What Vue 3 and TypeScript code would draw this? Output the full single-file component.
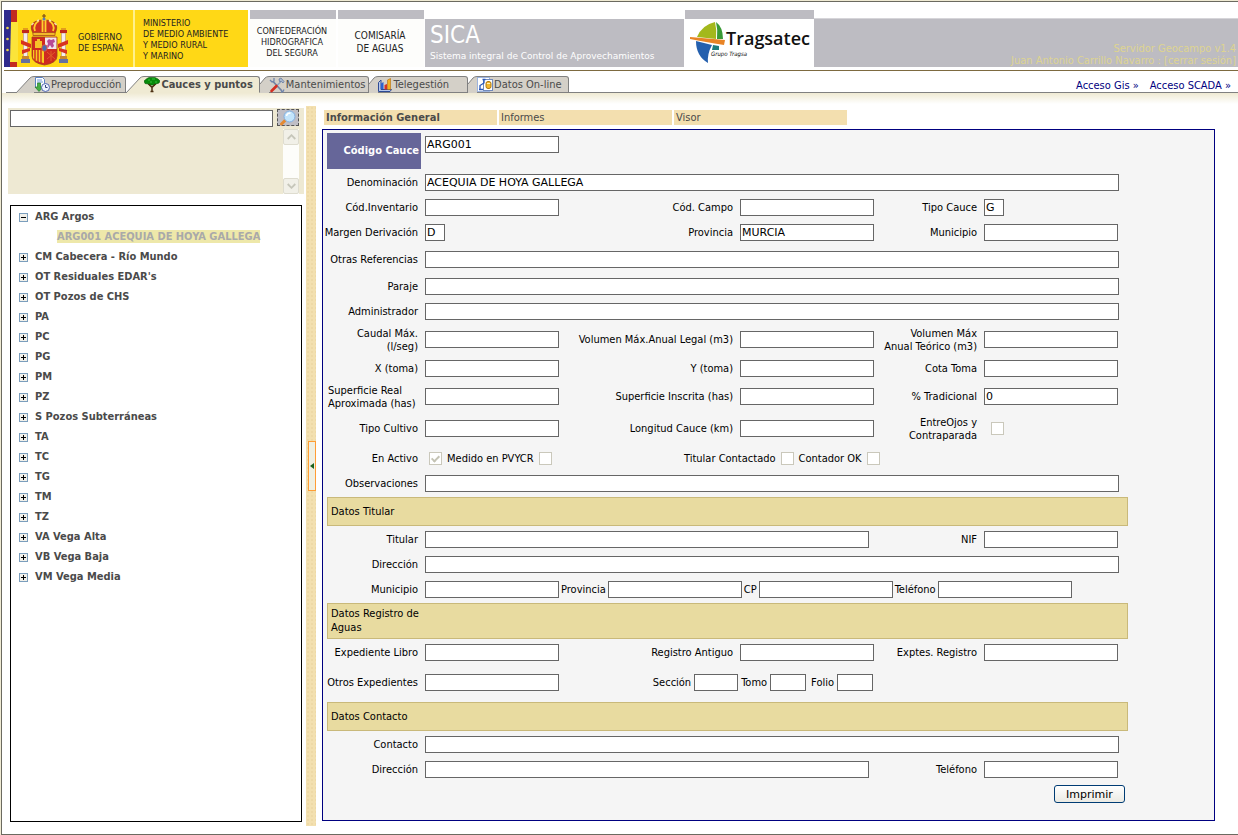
<script setup lang="ts">
import { ref } from 'vue'

interface TreeNode {
  label: string
  children?: string[]
}

interface Field {
  id: string
  label: string
  value?: string
  size?: 'tiny' | 'short' | 'medium' | 'wide'
  lines?: string[]
  check?: boolean
}

interface Row {
  height: string
  fields: Field[]
}

const tree: TreeNode[] = [
  { label: 'ARG Argos', children: ['ARG001 ACEQUIA DE HOYA GALLEGA'] },
  { label: 'CM Cabecera - Río Mundo' },
  { label: "OT Residuales EDAR's" },
  { label: 'OT Pozos de CHS' },
  { label: 'PA' },
  { label: 'PC' },
  { label: 'PG' },
  { label: 'PM' },
  { label: 'PZ' },
  { label: 'S Pozos Subterráneas' },
  { label: 'TA' },
  { label: 'TC' },
  { label: 'TG' },
  { label: 'TM' },
  { label: 'TZ' },
  { label: 'VA Vega Alta' },
  { label: 'VB Vega Baja' },
  { label: 'VM Vega Media' },
]

const views = ['Información General', 'Informes', 'Visor']
const activeView = ref(views[0])
const search = ref('')

const generalRows: Row[] = [
  { height: 'h25', fields: [{ id: 'denominacion', label: 'Denominación', value: 'ACEQUIA DE HOYA GALLEGA', size: 'wide' }] },
  {
    height: 'h25',
    fields: [
      { id: 'inventario', label: 'Cód.Inventario' },
      { id: 'campo', label: 'Cód. Campo' },
      { id: 'tipo-cauce', label: 'Tipo Cauce', value: 'G', size: 'tiny' },
    ],
  },
  {
    height: 'h25',
    fields: [
      { id: 'margen', label: 'Margen Derivación', value: 'D', size: 'tiny' },
      { id: 'provincia', label: 'Provincia', value: 'MURCIA' },
      { id: 'municipio', label: 'Municipio' },
    ],
  },
  { height: 'h29', fields: [{ id: 'referencias', label: 'Otras Referencias', size: 'wide' }] },
  { height: 'h25', fields: [{ id: 'paraje', label: 'Paraje', size: 'wide' }] },
  { height: 'h25', fields: [{ id: 'administrador', label: 'Administrador', size: 'wide' }] },
  {
    height: 'h31',
    fields: [
      { id: 'caudal', label: '', lines: ['Caudal Máx.', '(l/seg)'] },
      { id: 'vol-legal', label: 'Volumen Máx.Anual Legal (m3)' },
      { id: 'vol-teorico', label: '', lines: ['Volumen Máx', 'Anual Teórico (m3)'] },
    ],
  },
  {
    height: 'h27',
    fields: [
      { id: 'x-toma', label: 'X (toma)' },
      { id: 'y-toma', label: 'Y (toma)' },
      { id: 'cota', label: 'Cota Toma' },
    ],
  },
  {
    height: 'h29',
    fields: [
      { id: 'sup-real', label: '', lines: ['Superficie Real', 'Aproximada (has)'] },
      { id: 'sup-inscrita', label: 'Superficie Inscrita (has)' },
      { id: 'tradicional', label: '% Tradicional', value: '0' },
    ],
  },
  {
    height: 'h35',
    fields: [
      { id: 'cultivo', label: 'Tipo Cultivo' },
      { id: 'longitud', label: 'Longitud Cauce (km)' },
      { id: 'entreojos', label: '', lines: ['EntreOjos y', 'Contraparada'], check: true },
    ],
  },
]

const addressFields = [
  { id: 't-provincia', label: 'Provincia' },
  { id: 't-cp', label: 'CP' },
  { id: 't-telefono', label: 'Teléfono' },
]
</script>

<template>
  <div class="page">
    <header class="banner">
      <div class="gov">
        <svg class="crest" width="72" height="57" viewBox="0 0 72 57" aria-hidden="true">
          <rect width="8" height="57" fill="#2f2a8c" />
          <g fill="#e8d24a"><circle cx="3.500" cy="18" r="1.300" /><circle cx="3.500" cy="29" r="1.300" /><circle cx="3.500" cy="40" r="1.300" /></g>
          <path d="M7 0H13V12H7Z" fill="#c32a20" />
          <path d="M7 12H14V52H6Z" fill="#fbe43a" />
          <path d="M6 52H13V57H6Z" fill="#c32a20" />
          <g fill="#f4eeee" stroke="#b58f84" stroke-width=".6"><rect x="19.500" y="23" width="4" height="26" /><rect x="57.500" y="23" width="4" height="26" /></g>
          <path d="M18 20h7v3h-7zM56 20h7v3h-7z" fill="#c02a1b" />
          <path d="M19 18h5v2h-5zM57 18h5v2h-5z" fill="#e39c1c" />
          <path d="M17 49h9v4h-9zM55 49h9v4h-9z" fill="#66719e" />
          <path d="M18 46h7v3h-7zM56 46h7v3h-7z" fill="#c9882c" />
          <path d="M17 30l10 4v4l-10-4zM18 40l8-2v3l-8 3zM64 30l-10 4v4l10-4zM63 40l-8-2v3l8 3z" fill="#d8331f" />
          <path d="M28 21C25 13 32 10 40 10s15 3 12 11l-2 4H30Z" fill="#cf3320" stroke="#8b3a16" stroke-width=".7" />
          <path d="M31 21c-2-5 1-9 4-10M49 21c2-5-1-9-4-10M38.500 22V10h3v12" fill="none" stroke="#ffd02d" stroke-width="1.800" />
          <path d="M27.500 15l2-2M52.500 15l-2-2M33 11l2-1M47 11l-2-1" stroke="#f4e2ae" stroke-width="1.500" />
          <path d="M29 22.500h22v3H29z" fill="#f2b92b" stroke="#a3431a" stroke-width=".7" />
          <path d="M40 4v5M38 6h4" stroke="#7c4a16" stroke-width="1.200" />
          <circle cx="40" cy="9" r="1.500" fill="#567bb8" />
          <path d="M28 27H53V46Q53 53 40.500 55Q28 53 28 46Z" fill="#cf2a20" stroke="#a04420" stroke-width=".8" />
          <path d="M41 27.500H52.500V39H41Z" fill="#f1e6ec" />
          <path d="M43 31l2-2 2 1 3-1 1 3-2 1 1 3-2 2-2-3-2 3-1-2 1-2z" fill="#b84a96" />
          <path d="M31 31h2v-2h3v2h2v7h-7z" fill="#f6c428" />
          <path d="M29 40h11v13q-8-1-11-5z" fill="#f7cb20" />
          <path d="M31 40v10M34 40v12M37 40v13" stroke="#cf2a20" stroke-width="1.400" />
          <path d="M43 42l8 7M51 42l-8 7M47 41v10" stroke="#e0622a" stroke-width=".9" />
          <ellipse cx="40.500" cy="38" rx="2.700" ry="3.300" fill="#4a6db0" stroke="#dd5440" stroke-width="1" />
        </svg>
        <p>GOBIERNO<br>DE ESPAÑA</p>
      </div>
      <p class="ministry">MINISTERIO<br>DE MEDIO AMBIENTE<br>Y MEDIO RURAL<br>Y MARINO</p>
      <p class="org org-chs">CONFEDERACIÓN<br>HIDROGRAFICA<br>DEL SEGURA</p>
      <p class="org org-water">COMISARÍA<br>DE AGUAS</p>
      <div class="sica">
        <h1>SICA</h1>
        <p>Sistema integral de Control de Aprovechamientos</p>
      </div>
      <div class="tragsatec">
        <svg width="36" height="42" viewBox="0 0 36 42" aria-hidden="true">
          <path d="M7 15Q12 3 25 0Q27 8 26 17Z" fill="#a3b81c" />
          <path d="M26 0Q33 5 33 17L27 17Q28 8 26 0Z" fill="#3a9a36" />
          <path d="M6 19L22 23Q17 32 18 41Q6 34 6 19Z" fill="#2560ae" />
          <path d="M23 23L29 24V28H22Z" fill="#1d7d7c" />
          <path d="M0 15L35 18L34 23Q15 20 0 17Z" fill="#e88325" />
        </svg>
        <div class="brand"><strong>Tragsatec</strong><em>Grupo Tragsa</em></div>
      </div>
      <div class="session">
        <span>Servidor Geocampo v1.4</span>
        <span>Juan Antonio Carrillo Navarro : <a href="#">[cerrar sesión]</a></span>
      </div>
    </header>

    <nav class="tabs">
      <a class="tab first" href="#">
        <svg class="slant" width="18" height="17" viewBox="0 0 18 17" aria-hidden="true"><path d="M0 17L14 2Q15.500 .5 18 .5V17Z" fill="#d4d0c8" /><path d="M0 17L14 2Q15.500 .5 18 .5" fill="none" stroke="#808080" /></svg>
        <span class="face">
          <svg class="icon" width="16" height="16" viewBox="0 0 16 16" aria-hidden="true">
            <path d="M1.500 .5h7l2 2v8h-9z" fill="#fff" stroke="#5b82c4" /><path d="M3 3h5M3 5h6" stroke="#6f9ad6" />
            <path d="M3.500 6h3v4h2.500l-4 4.500-4-4.500h2.500z" fill="#47ae45" stroke="#25782b" stroke-width=".7" />
            <circle cx="11.500" cy="10.500" r="4" fill="#edf3ff" stroke="#5367b0" /><path d="M11.500 8v2.500h2" fill="none" stroke="#33447c" />
          </svg>Preproducción
        </span>
      </a>
      <a class="tab active" href="#">
        <svg class="slant" width="18" height="17" viewBox="0 0 18 17" aria-hidden="true"><path d="M0 17L14 2Q15.500 .5 18 .5V17Z" fill="#efead3" /><path d="M0 17L14 2Q15.500 .5 18 .5" fill="none" stroke="#808080" /></svg>
        <span class="face">
          <svg class="icon" width="16" height="16" viewBox="0 0 16 16" aria-hidden="true">
            <path d="M3 1.500L5 .5h6l3 1.500 2 2-1 2-3 1-1.500 1.500L8 8 5.500 8.500 4 7 1 6.500 0 4z" fill="#078b0a" stroke="#045704" stroke-width=".6" />
            <path d="M4.500 7L8 10.500 11.500 7M8 9v6M6.500 14.500h3" fill="none" stroke="#4b2f12" stroke-width="1.500" />
            <path d="M4 3h2M8 2h3M11 5h2M6 5h2" stroke="#35c136" />
          </svg>Cauces y puntos
        </span>
      </a>
      <a class="tab snug" href="#">
        <svg class="slant" width="9" height="17" viewBox="0 0 9 17" aria-hidden="true"><path d="M0 8L5 2Q6.500 .5 9 .5V17H0Z" fill="#d4d0c8" /><path d="M0 8L5 2Q6.500 .5 9 .5" fill="none" stroke="#808080" /></svg>
        <span class="face">
          <svg class="icon" width="16" height="16" viewBox="0 0 16 16" aria-hidden="true">
            <path d="M4 4.500L13 14" stroke="#7184a5" stroke-width="1.800" />
            <path d="M1 3l2 2 2-1V1M12 15l2-.5 1-2" fill="none" stroke="#6f85ad" stroke-width="1.300" />
            <path d="M12 4.500L7.500 9" stroke="#8fa3c2" stroke-width="1.500" />
            <path d="M7.500 9L2.500 14" stroke="#d32f22" stroke-width="2.600" stroke-linecap="round" />
            <path d="M10 2l2-1 3 3.500-1 1.500-1.500-1.500-2 0z" fill="#a9b9d0" stroke="#5c7198" stroke-width=".7" />
          </svg>Mantenimientos
        </span>
      </a>
      <a class="tab roomy" href="#">
        <svg class="slant" width="9" height="17" viewBox="0 0 9 17" aria-hidden="true"><path d="M0 8L5 2Q6.500 .5 9 .5V17H0Z" fill="#d4d0c8" /><path d="M0 8L5 2Q6.500 .5 9 .5" fill="none" stroke="#808080" /></svg>
        <span class="face">
          <svg class="icon" width="14" height="14" viewBox="0 0 14 14" aria-hidden="true">
            <path d="M.5 4.500L3 2v9.500h10.500L12 13.500H.5z" fill="#b7c7ea" stroke="#2d4a94" />
            <path d="M3 5.500L5.500 4v7H3z" fill="#2b62cf" /><path d="M6.500 7L9 6v5.500H6.500z" fill="#d83424" /><path d="M9.500 2L12.500 .5v11h-3z" fill="#f6b11e" stroke="#b36d0e" stroke-width=".6" />
          </svg>Telegestión
        </span>
      </a>
      <a class="tab" href="#">
        <svg class="slant" width="9" height="17" viewBox="0 0 9 17" aria-hidden="true"><path d="M0 8L5 2Q6.500 .5 9 .5V17H0Z" fill="#d4d0c8" /><path d="M0 8L5 2Q6.500 .5 9 .5" fill="none" stroke="#808080" /></svg>
        <span class="face">
          <svg class="icon" width="16" height="16" viewBox="0 0 16 16" aria-hidden="true">
            <rect x=".5" y=".5" width="12" height="14" fill="#fff" stroke="#9db4dd" />
            <rect x="6.500" y="2.500" width="9" height="11" fill="#fff" stroke="#7089bb" />
            <path d="M5.500 2.500h3M7 3v3L3 8.500V12M2 12.500h4" fill="none" stroke="#2656bb" stroke-width="1.300" />
            <rect x="9" y="4.500" width="5" height="7" rx="2" fill="#f2b72f" stroke="#b07a12" /><path d="M10 6.500h3" stroke="#fff3b8" />
          </svg>Datos On-line
        </span>
      </a>
      <div class="links"><a href="#">Acceso Gis »</a><a href="#">Acceso SCADA »</a></div>
    </nav>

    <div class="body">
      <aside class="side">
        <form class="finder" @submit.prevent>
          <div class="finder-bar">
            <input v-model="search" type="text" class="box" aria-label="Buscar">
            <button type="submit" class="find" aria-label="Buscar">
              <svg width="16" height="16" viewBox="0 0 16 16" aria-hidden="true">
                <path d="M1.500 14L5 10.500" stroke="#e58a32" stroke-width="3" stroke-linecap="round" />
                <circle cx="9.500" cy="6.500" r="5.500" fill="#c2e4fb" stroke="#82aee0" /><path d="M6.500 6q.5-3 4-3" fill="none" stroke="#fff" stroke-width="1.500" />
              </svg>
            </button>
          </div>
          <div class="scroller">
            <button type="button" aria-label="Subir"><svg width="9" height="6" viewBox="0 0 9 6"><path d="M.7 5L4.500 1.200L8.300 5" fill="none" stroke="#c6c6ba" stroke-width="1.800" /></svg></button>
            <button type="button" aria-label="Bajar"><svg width="9" height="6" viewBox="0 0 9 6"><path d="M.7 1L4.500 4.800L8.300 1" fill="none" stroke="#c6c6ba" stroke-width="1.800" /></svg></button>
          </div>
        </form>
        <ul class="tree">
          <li v-for="node in tree" :key="node.label">
            <div class="node">
              <button type="button" class="toggle" :aria-label="node.label">
                <svg width="9" height="9" viewBox="0 0 9 9" aria-hidden="true">
                  <rect x=".5" y=".5" width="8" height="8" fill="#f1f0ea" stroke="#7b9ebd" />
                  <path d="M2 4.500h5" stroke="#000" /><path v-if="!node.children" d="M4.500 2v5" stroke="#000" />
                </svg>
              </button>
              <a href="#">{{ node.label }}</a>
            </div>
            <ul v-if="node.children" class="leaves">
              <li v-for="child in node.children" :key="child"><a href="#">{{ child }}</a></li>
            </ul>
          </li>
        </ul>
      </aside>

      <div class="splitter">
        <button type="button" aria-label="Ocultar panel"><svg width="4" height="6" viewBox="0 0 4 6"><path d="M4 0V6L0 3Z" fill="#1d611d" /></svg></button>
      </div>

      <main class="main">
        <nav class="views">
          <a v-for="view in views" :key="view" href="#" :class="{ on: view === activeView }" @click.prevent="activeView = view">{{ view }}</a>
        </nav>

        <form class="panel" @submit.prevent>
          <div class="row code">
            <label class="code-label" for="codigo">Código Cauce</label>
            <input id="codigo" class="box" type="text" value="ARG001">
          </div>

          <div v-for="row in generalRows" :key="row.fields[0].id" class="row" :class="row.height">
            <template v-for="field in row.fields" :key="field.id">
              <label :for="field.id" :class="{ left: field.id === 'sup-real' }">
                <template v-if="field.lines">{{ field.lines[0] }}<br>{{ field.lines[1] }}</template>
                <template v-else>{{ field.label }}</template>
              </label>
              <input v-if="field.check" :id="field.id" class="tick apart" type="checkbox" disabled>
              <input v-else :id="field.id" class="box" :class="field.size" type="text" :value="field.value">
            </template>
          </div>

          <div class="row h25">
            <label for="activo">En Activo</label>
            <div class="inline checks">
              <input id="activo" class="tick" type="checkbox" checked disabled>
              <label for="pvycr">Medido en PVYCR</label>
              <input id="pvycr" class="tick" type="checkbox" disabled>
            </div>
            <div class="inline checks late">
              <label for="contactado">Titular Contactado</label>
              <input id="contactado" class="tick" type="checkbox" disabled>
              <label for="contador">Contador OK</label>
              <input id="contador" class="tick" type="checkbox" disabled>
            </div>
          </div>
          <div class="row h25">
            <label for="observaciones">Observaciones</label>
            <input id="observaciones" class="box wide" type="text">
          </div>

          <h2><span>Datos Titular</span></h2>
          <div class="row h25">
            <label for="titular">Titular</label><input id="titular" class="box medium" type="text">
            <label for="nif">NIF</label><input id="nif" class="box" type="text">
          </div>
          <div class="row h25">
            <label for="t-direccion">Dirección</label><input id="t-direccion" class="box wide" type="text">
          </div>
          <div class="row h25">
            <label for="t-municipio">Municipio</label>
            <div class="inline whole">
              <input id="t-municipio" class="box" type="text">
              <template v-for="item in addressFields" :key="item.id">
                <label :for="item.id">{{ item.label }}</label><input :id="item.id" class="box" type="text">
              </template>
            </div>
          </div>

          <h2><span>Datos Registro de Aguas</span></h2>
          <div class="row h25">
            <label for="libro">Expediente Libro</label><input id="libro" class="box" type="text">
            <label for="antiguo">Registro Antiguo</label><input id="antiguo" class="box" type="text">
            <label for="exptes">Exptes. Registro</label><input id="exptes" class="box" type="text">
          </div>
          <div class="row h35">
            <label for="otros">Otros Expedientes</label><input id="otros" class="box" type="text">
            <div class="inline book">
              <label for="seccion">Sección</label><input id="seccion" class="box section" type="text">
              <label for="tomo">Tomo</label><input id="tomo" class="box short" type="text">
              <label for="folio" class="folio">Folio</label><input id="folio" class="box short" type="text">
            </div>
          </div>

          <h2><span>Datos Contacto</span></h2>
          <div class="row h25">
            <label for="contacto">Contacto</label><input id="contacto" class="box wide" type="text">
          </div>
          <div class="row h25">
            <label for="c-direccion">Dirección</label><input id="c-direccion" class="box medium" type="text">
            <label for="c-telefono">Teléfono</label><input id="c-telefono" class="box" type="text">
          </div>
          <div class="actions"><button type="submit">Imprimir</button></div>
        </form>
      </main>
    </div>
  </div>
</template>

<style>
body {
  margin: 0;
  background: #efead3;
}
</style>

<style scoped>
* {
  box-sizing: border-box;
}
.page {
  display: flex;
  flex-direction: column;
  min-height: calc(100vh - 1px);
  margin: 1px 0 0 1px;
  border: 1px solid #6b6a60;
  border-right: 0;
  background: #fff;
  font: 11px/13px "DejaVu Sans Condensed", "DejaVu Sans", sans-serif;
  color: #000;
}
p,
h1,
h2,
ul {
  margin: 0;
  padding: 0;
}
a {
  color: inherit;
  text-decoration: none;
}
button {
  padding: 0;
  font: inherit;
}

/* Banner */
.banner {
  display: flex;
  height: 69px;
  margin-left: 2px;
  padding: 8px 0 3px;
  border-bottom: 1px solid #7d6a40;
  font-size: 9px;
  line-height: 11px;
  color: #222;
}
.gov {
  display: flex;
  align-items: center;
  width: 129px;
  background: #ffd816;
}
.gov p {
  padding: 9px 0 0 2px;
}
.crest {
  flex: none;
}
.ministry {
  width: 115px;
  padding: 8px 0 0 8px;
  border-left: 2px solid #fff08c;
  background: #ffd816;
}
.org {
  width: 86px;
  margin-left: 2px;
  border-top: 9px solid #bdbcc2;
  background: #fdfdfb;
  text-align: center;
}
.org-chs {
  padding: 7px 2px 0 0;
}
.org-water {
  padding: 10px 2px 0 0;
  font-size: 10px;
  line-height: 13px;
}
.sica {
  width: 259px;
  margin: 9px 1px 0;
  padding: 2px 0 0 5px;
  background: #bdbcc2;
  color: #fff;
}
.sica h1 {
  font-size: 24px;
  font-weight: 400;
  line-height: 28px;
}
.sica p {
  padding-top: 2px;
  font-family: "DejaVu Sans", sans-serif;
  white-space: nowrap;
}
.tragsatec {
  display: flex;
  width: 129px;
  padding: 3px 0 0 5px;
  border-top: 9px solid #bdbcc2;
}
.tragsatec svg {
  flex: none;
}
.brand {
  display: flex;
  flex-direction: column;
  padding-top: 4px;
  color: #111;
}
.brand strong {
  font: 600 18px/24px "Open Sans", sans-serif;
}
.brand em {
  margin-left: -15px;
  font-size: 6px;
  line-height: 8px;
}
.session {
  display: flex;
  flex: 1;
  flex-direction: column;
  justify-content: flex-end;
  margin-top: 8px;
  padding-right: 2px;
  border-top: 1px solid #d6d5d9;
  background: #bdbcc2;
  font-size: 11px;
  line-height: 12px;
  color: #ddd491;
  text-align: right;
}

/* Section tabs */
.tabs {
  display: flex;
  height: 22px;
  margin-left: 4px;
  padding-top: 5px;
  background: linear-gradient(#808080, #808080) bottom / 100% 1px no-repeat;
  color: #4a4a4a;
}
.tab {
  display: flex;
}
.tab.first {
  margin-left: 10px;
}
.slant {
  flex: none;
}
.face {
  display: flex;
  align-items: center;
  gap: 1px;
  padding-right: 6px;
  border: solid #808080;
  border-width: 1px 1px 1px 0;
  border-top-right-radius: 3px;
  background: #d4d0c8;
  white-space: nowrap;
}
.first .face {
  padding-right: 4px;
}
.snug .face {
  padding-right: 2px;
}
.roomy .face {
  gap: 2px;
  padding-right: 18px;
}
.active .face {
  border-bottom-color: #efead3;
  background: #efead3;
  font-weight: 700;
}
.icon {
  flex: none;
}
.links {
  display: flex;
  gap: 11px;
  margin-left: auto;
  padding: 3px 7px 0 0;
  color: #000080;
}

/* Body */
.body {
  display: flex;
  flex: 1;
  gap: 2px;
  padding: 13px 23px 8px 6px;
  background: linear-gradient(#efead3, #fff 11px);
}
.side {
  display: flex;
  flex: none;
  flex-direction: column;
  width: 296px;
  padding: 2px 0 4px;
}
.finder {
  height: 86px;
  padding: 1px 5px 0 2px;
  background: #eee9d3;
}
.finder-bar {
  display: flex;
  gap: 4px;
  padding-bottom: 2px;
}
.finder-bar .box {
  flex: 1;
  margin-top: 1px;
}
.find {
  display: flex;
  align-items: center;
  justify-content: center;
  width: 22px;
  height: 17px;
  border: 1px dashed #555;
  background: #bfbec5;
}
.scroller {
  display: flex;
  flex-direction: column;
  justify-content: space-between;
  width: 16px;
  height: 65px;
  margin-left: auto;
  background: #fdfdfa;
}
.scroller button {
  display: flex;
  align-items: center;
  justify-content: center;
  height: 16px;
  border: 1px solid #dedccf;
  border-radius: 2px;
  background: #f1f0e8;
}
.tree {
  flex: 1;
  margin: 11px 2px 0;
  padding: 1px 0 0 8px;
  border: 1px solid #000;
  background: #fff;
  font-weight: 700;
  line-height: 20px;
  color: #4a4a4a;
  list-style: none;
}
.node {
  display: flex;
  align-items: center;
  gap: 7px;
}
.toggle {
  display: flex;
  border: 0;
  background: none;
}
.leaves {
  padding-left: 38px;
  list-style: none;
}
.leaves a {
  background: #eee8aa;
  color: #a9a9a9;
}
.splitter {
  display: flex;
  flex: none;
  align-items: center;
  justify-content: flex-end;
  width: 10px;
  background: radial-gradient(#eed9a6 1px, transparent 1px) 0 0 / 4px 4px #f3e0b0;
}
.splitter button {
  display: flex;
  align-items: center;
  justify-content: flex-end;
  width: 8px;
  height: 50px;
  padding-right: 1px;
  border: 1px solid #ff9d35;
  background: #efefe2;
}

/* Content */
.main {
  display: flex;
  flex: 1;
  flex-direction: column;
  padding: 4px 0 5px 4px;
}
.views {
  display: flex;
  gap: 2px;
  padding-left: 2px;
  color: #4a4a4a;
}
.views a {
  width: 173px;
  padding-left: 2px;
  background: #f3dfaf;
  line-height: 15px;
}
.views .on {
  font-weight: 700;
}
.panel {
  flex: 1;
  margin-top: 4px;
  padding: 3px 86px 17px 4px;
  border: 1px solid #000080;
  background: #f5f5f5;
}
.row {
  display: grid;
  grid-template-columns: 98px 134px 181fr 134px 110fr 144px;
  align-items: center;
}
.row > label {
  padding-right: 7px;
  text-align: right;
  white-space: nowrap;
}
.row > label.left {
  padding: 0 0 0 1px;
  text-align: left;
}
.row > label:first-child:not(.left) {
  justify-self: end;
}
.h25 {
  height: 25px;
}
.h27 {
  height: 27px;
}
.h29 {
  height: 29px;
}
.h31 {
  height: 31px;
}
.h35 {
  height: 35px;
}
.code {
  align-items: start;
  height: 37px;
}
.row > .code-label:first-child:not(.left) {
  justify-self: start;
  width: 94px;
  padding: 0 2px 0 0;
  background: #666699;
  font-weight: 700;
  line-height: 36px;
  color: #fff;
}
.code .box {
  margin-top: 3px;
}
.box {
  width: 134px;
  height: 17px;
  padding: 0 1px;
  border: 1px solid #666;
  border-radius: 0;
  background: #fff;
  font: 11px/13px "DejaVu Sans", sans-serif;
  color: #000;
}
.box.tiny {
  width: 20px;
}
.box.short {
  width: 36px;
}
.box.section {
  width: 44px;
}
.box.medium {
  grid-column: 2 / 5;
  width: auto;
  margin-right: 5px;
}
.box.wide {
  grid-column: 2 / -1;
  width: auto;
  margin-right: 9px;
}
.tick {
  display: flex;
  align-items: center;
  justify-content: center;
  width: 13px;
  height: 13px;
  margin: 0;
  border: 1px solid #cac8bb;
  background: #fff;
  appearance: none;
}
.tick:checked::after {
  width: 3px;
  height: 6px;
  margin-bottom: 2px;
  border: solid #c4c3b4;
  border-width: 0 2px 2px 0;
  transform: rotate(45deg);
  content: "";
}
.tick.apart {
  margin-left: 7px;
}
.inline {
  display: flex;
  align-items: center;
  gap: 2px;
  white-space: nowrap;
}
.whole {
  grid-column: 2 / -1;
}
.checks {
  gap: 5px;
  padding-left: 4px;
}
.late {
  grid-column: 4 / -1;
  margin-left: -60px;
}
.book {
  grid-column: 3 / 5;
  gap: 3px;
  justify-content: flex-end;
  padding-right: 1px;
}
.folio {
  padding-left: 2px;
}
h2 {
  display: flex;
  align-items: center;
  min-height: 29px;
  margin: 1px 0;
  padding: 3px;
  border: 1px solid #c9b97a;
  background: #e8dba0;
  font-size: 11px;
  font-weight: 400;
  line-height: 14px;
}
h2:last-of-type {
  margin-top: 2px;
}
h2 span {
  width: 94px;
}
.actions {
  display: flex;
  justify-content: flex-end;
  padding: 3px 3px 0;
}
.actions button {
  width: 71px;
  height: 18px;
  border: 1px solid #003c74;
  border-radius: 3px;
  background: linear-gradient(#fff, #ebeae3);
  font: 11px/13px "DejaVu Sans", sans-serif;
}
</style>
